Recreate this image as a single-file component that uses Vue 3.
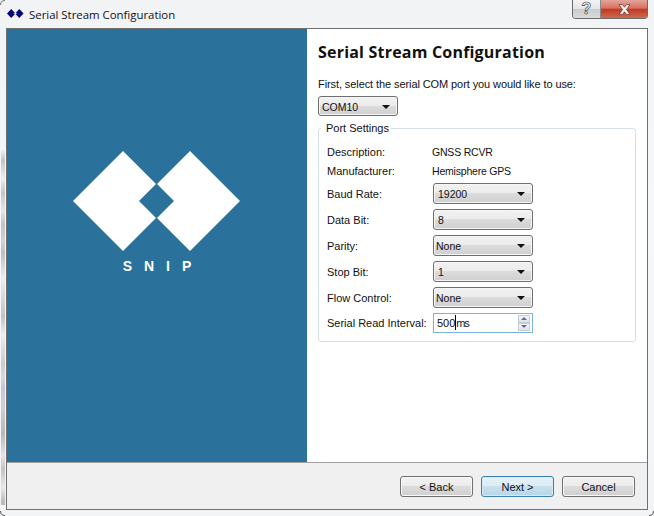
<script setup>
const rows = [
  { label: 'Baud Rate:', value: '19200' },
  { label: 'Data Bit:', value: '8' },
  { label: 'Parity:', value: 'None', tight: true },
  { label: 'Stop Bit:', value: '1' },
  { label: 'Flow Control:', value: 'None', tight: true }
]
</script>

<template>
  <div class="window">
    <div class="titlebar">
      <svg class="title-icon" width="17" height="9" viewBox="0 0 17 9">
        <polygon points="0,4.5 4.2,0 8,4 6,4.5 8,5 4.2,9" fill="#06067e" />
        <polygon points="12.3,0 16.5,4.5 12.3,9 8.6,5 10.5,4.5 8.6,4" fill="#06067e" />
      </svg>
      <span class="title-text">Serial Stream Configuration</span>
    </div>

    <div class="caption-btns">
      <div class="cap-help">
        <span class="help-mark">?</span>
      </div>
      <div class="cap-close">
        <svg width="15" height="11" viewBox="0 0 15 11">
          <path d="M2 0.6 L5.5 0.6 L7.5 3.2 L9.5 0.6 L13 0.6 L9.5 5.5 L13 10.4 L9.5 10.4 L7.5 7.8 L5.5 10.4 L2 10.4 L5.5 5.5 Z" fill="#f4f1f0" stroke="#6e3a33" stroke-width="0.8" />
        </svg>
      </div>
    </div>

    <div class="client">
      <div class="main">
        <div class="side">
          <svg class="logo" width="168" height="101" viewBox="0 0 168 101">
            <polygon points="0,50 50,0 83,33 66,50 83,67 50,100" fill="#fff" />
            <polygon points="117,0 167,50 117,100 84,67 101,50 84,33" fill="#fff" />
          </svg>
          <div class="snip">SNIP</div>
        </div>

        <div class="page">
          <h1 class="heading">Serial Stream Configuration</h1>
          <div class="intro">First, select the serial COM port you would like to use:</div>
          <div class="combo com">
            <span>COM10</span>
            <i class="arrow"></i>
          </div>

          <fieldset class="group">
            <legend>Port Settings</legend>
            <div class="info">
              <span>Description:</span>
              <span class="val">GNSS RCVR</span>
            </div>
            <div class="info">
              <span>Manufacturer:</span>
              <span class="val">Hemisphere GPS</span>
            </div>
            <div v-for="r in rows" :key="r.label" class="row">
              <span>{{ r.label }}</span>
              <div class="combo" :class="{ tight: r.tight }">
                <span>{{ r.value }}</span>
                <i class="arrow"></i>
              </div>
            </div>
            <div class="row spin-row">
              <span>Serial Read Interval:</span>
              <div class="spin">
                <span class="spin-val">500<b class="caret"></b><span class="unit">ms</span></span>
                <div class="spin-btns">
                  <div class="spin-btn"><i class="up"></i></div>
                  <div class="spin-btn"><i class="down"></i></div>
                </div>
              </div>
            </div>
          </fieldset>
        </div>
      </div>

      <div class="footer">
        <button class="btn">&lt; Back</button>
        <button class="btn default">Next &gt;</button>
        <button class="btn">Cancel</button>
      </div>
    </div>

    <!-- blurred desktop showing through the aero frame -->
    <div class="frame-blur"></div>
    <svg class="corners" width="654" height="516" viewBox="0 0 654 516">
      <path d="M0.5 5 Q0.5 0.5 5 0.5" fill="none" stroke="#777" />
      <path d="M0.5 511 Q0.5 515.5 5 515.5" fill="none" stroke="#555" />
      <path d="M653.5 511 Q653.5 515.5 649 515.5" fill="none" stroke="#555" />
    </svg>
  </div>
</template>

<style>
html, body {
  margin: 0;
  background: #f3f5f7;
}
</style>

<style scoped>
* {
  box-sizing: border-box;
}

.window {
  position: relative;
  width: 654px;
  height: 516px;
  display: flex;
  flex-direction: column;
  padding: 0 6px 6px;
  overflow: hidden;
  background: linear-gradient(#f1f3f5, #f6f7f9 40%, #f3f4f6);
  font-family: "Liberation Sans", Arial, sans-serif;
  font-size: 11px;
  color: #111;
}

.frame-blur {
  position: absolute;
  left: 1px;
  top: 150px;
  width: 4px;
  height: 355px;
  background: linear-gradient(#f0f0f0, #c4c4c4 3%, #eee 8%, #c6c6c6 12%, #e6e6e6 17%, #c4c4c4 21%, #d2d2d2 26%, #c0c0c0 29%, #eee 36%, #c4c4c4 47%, #eee 52%, #ccc 60%, #d8d8d8 64%, #c4c4e0 67%, #d0d0d0 72%, #b8b8b8 80%, #e4e4e4 86%, #c4c4c4 90%, #e8e8e8 95%, #bcbcbc 99%);
  filter: blur(0.6px);
}
.corners {
  position: absolute;
  left: 0;
  top: 0;
  pointer-events: none;
}

.titlebar {
  height: 27px;
  margin-bottom: 1px;
  display: flex;
  align-items: center;
  flex-shrink: 0;
}
.title-icon {
  margin-left: 1px;
}
.title-text {
  margin-left: 5px;
  padding-top: 1px;
  font-family: "Open Sans", sans-serif;
  font-size: 11.4px;
  color: #101020;
}

.caption-btns {
  position: absolute;
  top: 0;
  left: 572px;
  display: flex;
  height: 19px;
  border: 1px solid #6b6b6b;
  border-top: none;
  border-radius: 0 0 4px 4px;
  overflow: hidden;
}
.cap-help {
  width: 28px;
  display: flex;
  align-items: center;
  justify-content: center;
  background: linear-gradient(#f4f4f4, #e4e4e4 50%, #c9ccce 52%, #d9dbdd);
  border-right: 1px solid #8a8a8a;
}
.help-mark {
  font-family: "Liberation Sans", sans-serif;
  font-size: 16px;
  font-weight: 700;
  color: #f6f6f6;
  -webkit-text-stroke: 0.7px #4a4e52;
}
.cap-close {
  width: 46px;
  display: flex;
  align-items: center;
  justify-content: center;
  background: linear-gradient(#e3a59c, #d9705f 45%, #c23a22 52%, #cf6a52);
}

.client {
  flex: 1;
  display: flex;
  flex-direction: column;
  border: 1px solid #6f6f6f;
  background: #f0f0f0;
}
.main {
  height: 434px;
  display: flex;
  border-bottom: 1px solid #a0a0a0;
  background: #fff;
}

.side {
  width: 300px;
  flex-shrink: 0;
  background: #2a719b;
  display: flex;
  flex-direction: column;
  align-items: center;
  padding-top: 122px;
}
.logo {
  display: block;
}
.snip {
  margin-top: 6px;
  font-family: "Liberation Sans", sans-serif;
  font-size: 14px;
  font-weight: 700;
  letter-spacing: 12px;
  padding-left: 12px;
  color: #fff;
}

.page {
  flex: 1;
  padding: 13px 11px 0;
}
.heading {
  margin: 0;
  font-family: "Open Sans", "Liberation Sans", sans-serif;
  font-size: 16px;
  letter-spacing: 0.2px;
  line-height: 20px;
  font-weight: 700;
  color: #111;
}
.intro {
  margin-top: 15px;
  line-height: 14px;
  letter-spacing: -0.09px;
  white-space: nowrap;
}

.combo {
  width: 100px;
  height: 21px;
  display: flex;
  align-items: center;
  justify-content: space-between;
  padding: 1px 7px 0 4px;
  font-size: 10.5px;
  border: 1px solid #6f6f6f;
  border-radius: 3px;
  background: linear-gradient(#f2f2f2, #ebebeb 48%, #dcdcdc 50%, #cfcfcf);
  box-shadow: inset 0 0 0 1px #f6f6f6;
}
.combo.tight {
  padding-left: 2px;
}
.combo.com {
  width: 80px;
  height: 20px;
  margin-top: 5px;
  padding-left: 3px;
}
.arrow {
  width: 0;
  height: 0;
  border-left: 4px solid transparent;
  border-right: 4px solid transparent;
  border-top: 4px solid #111;
}

.group {
  margin: 6px 0 0;
  padding: 7px 8px 0;
  width: 318px;
  height: 220px;
  min-width: 0;
  border: 1px solid #d5dfe5;
  border-radius: 3px;
}
.group legend {
  margin-left: -6px;
  padding: 0 2px 0 5px;
  line-height: 13px;
}

.info {
  height: 19px;
  display: grid;
  grid-template-columns: 105px 1fr;
  align-items: center;
}
.val {
  font-size: 10.5px;
  letter-spacing: -0.2px;
}
.row {
  height: 26px;
  display: grid;
  grid-template-columns: 106px 100px;
  align-items: center;
  padding-top: 1px;
}
.spin-row {
  height: 25px;
  padding-top: 0;
}

.spin {
  height: 20px;
  display: flex;
  align-items: center;
  justify-content: space-between;
  padding: 0 2px 0 3px;
  border: 1px solid #7cb4d8;
  background: #fff;
}
.spin-val {
  display: flex;
  align-items: center;
}
.unit {
  letter-spacing: -1.2px;
}
.caret {
  display: block;
  width: 1px;
  height: 15px;
  background: #000;
}
.spin-btns {
  width: 12px;
  display: flex;
  flex-direction: column;
}
.spin-btn {
  height: 8px;
  display: flex;
  align-items: center;
  justify-content: center;
  border: 1px solid #c4ccd4;
  background: linear-gradient(#f4f6f8, #dde3e9);
}
.up, .down {
  width: 0;
  height: 0;
  border-left: 3px solid transparent;
  border-right: 3px solid transparent;
}
.up {
  border-bottom: 3px solid #5a6f9c;
}
.down {
  border-top: 3px solid #5a6f9c;
}

.footer {
  flex: 1;
  display: flex;
  justify-content: flex-end;
  align-items: flex-start;
  gap: 8px;
  padding: 13px 12px 0 0;
}
.btn {
  width: 73px;
  height: 21px;
  padding: 0;
  font: inherit;
  color: #111;
  border: 1px solid #707070;
  border-radius: 3px;
  background: linear-gradient(#f2f2f2, #ebebeb 48%, #dcdcdc 50%, #cfcfcf);
  box-shadow: inset 0 0 0 1px #f8f8f8;
}
.btn.default {
  border-color: #3c7fb1;
  background: linear-gradient(#e6f2f9, #dcecf5 48%, #c8e0ee 50%, #b8d6e7);
  box-shadow: inset 0 0 0 1px #d4ecf8;
}
</style>
